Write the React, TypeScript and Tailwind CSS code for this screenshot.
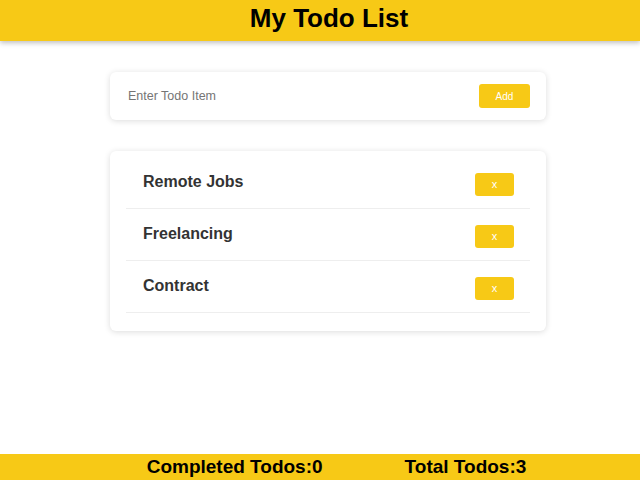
import React from "react";

const todos = ["Remote Jobs", "Freelancing", "Contract"];

export default function App() {
  return (
    <div
      className="flex h-screen flex-col bg-white"
      style={{ fontFamily: '"Liberation Sans", Arial, sans-serif' }}
    >
      <header className="relative z-10 h-[41px] bg-[#f7c916] pt-[4px] pl-[18px] text-center text-[26px] font-bold leading-[29px] text-black shadow-[0_2px_5px_rgba(0,0,0,0.25)]">
        My Todo List
      </header>

      <main className="flex flex-col items-center pl-[16px] pt-[31px]">
        <div className="flex h-[48px] w-[436px] items-center rounded-[6px] bg-white px-4 shadow-[0_1px_6px_rgba(0,0,0,0.14)]">
          <input
            className="flex-1 pl-[2px] text-[12.5px] text-[#333] outline-none placeholder:text-[#757575]"
            placeholder="Enter Todo Item"
          />
          <button className="h-[24px] w-[51px] rounded-[3px] bg-[#f7c916] text-[10px] text-white">
            Add
          </button>
        </div>

        <div className="mt-[31px] w-[436px] rounded-[6px] bg-white px-4 pt-[6px] pb-[18px] shadow-[0_1px_6px_rgba(0,0,0,0.14)]">
          {todos.map((t) => (
            <div
              key={t}
              className="flex items-start justify-between border-b border-[#eeeeee] pl-[17px] pr-4 pt-4 pb-3"
            >
              <span className="text-[16px] font-bold leading-[18px] text-[#333333]">{t}</span>
              <button className="h-[23px] w-[39px] rounded-[3px] bg-[#f7c916] text-[11px] leading-[23px] text-white">
                x
              </button>
            </div>
          ))}
        </div>
      </main>

      <footer className="mt-auto flex h-[26px] items-center justify-center gap-[82px] bg-[#f7c916] pl-[33px] text-[19px] font-bold leading-[22px] text-black">
        <span>Completed Todos:0</span>
        <span>Total Todos:3</span>
      </footer>
    </div>
  );
}
